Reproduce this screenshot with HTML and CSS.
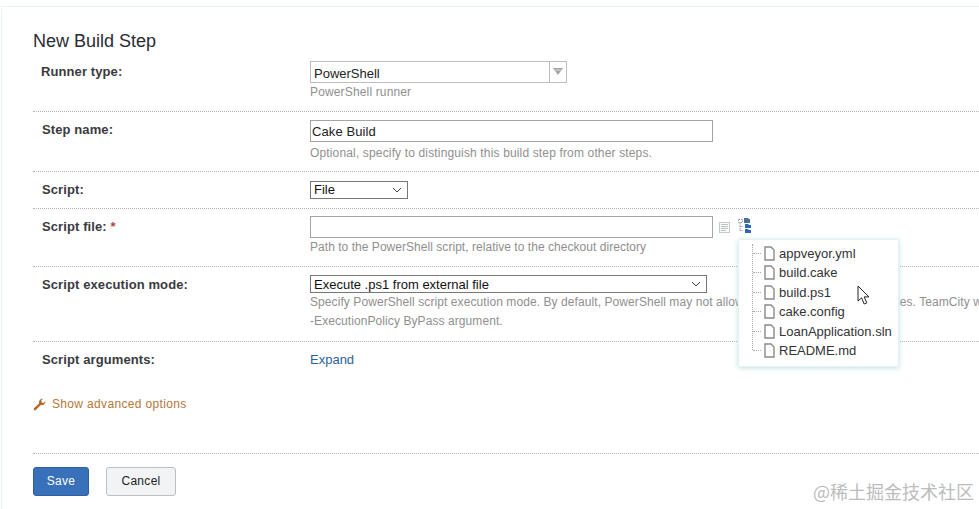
FILE: index.html
```html
<!DOCTYPE html>
<html lang="en">
<head>
  <meta charset="UTF-8" />
  <meta name="viewport" content="width=device-width, initial-scale=1.0" />
  <title>New Build Step</title>
  <link rel="stylesheet" href="styles.css">
</head>
<body>
  <div class="panel">
    <h2 class="title">New Build Step</h2>

    <div class="row row-first">
      <div class="label label-first">Runner type:</div>
      <div class="field">
        <div class="combo">
          <div class="combo-text">PowerShell</div>
          <div class="combo-btn">
            <svg width="12" height="8" viewBox="0 0 12 8"><path d="M1 0h10L6 7z" fill="#a4a4a4"/><path d="M3.5 2h5" stroke="#e2e2e2"/></svg>
          </div>
        </div>
        <div class="hint">PowerShell runner</div>
      </div>
    </div>

    <div class="row row-name">
      <div class="label">Step name:</div>
      <div class="field">
        <input class="text-input" type="text" value="Cake Build">
        <div class="hint">Optional, specify to distinguish this build step from other steps.</div>
      </div>
    </div>

    <div class="row row-script">
      <div class="label label-low">Script:</div>
      <div class="field">
        <div class="select select-short">
          <span>File</span>
          <svg width="10" height="6" viewBox="0 0 10 6"><path d="M1 1l4 4 4-4" fill="none" stroke="#444" stroke-width="1"/></svg>
        </div>
      </div>
    </div>

    <div class="row row-file">
      <div class="label">Script file: <span class="req">*</span></div>
      <div class="field">
        <div class="input-line">
          <input class="text-input" type="text" value="">
          <svg class="icon-list" width="11" height="11" viewBox="0 0 11 11"><rect x="0.5" y="0.5" width="10" height="10" fill="#fafbfb" stroke="#c3cccc"/><path d="M2 2.5h7M2 4.5h7M2 6.5h7M2 8.5h5" stroke="#bcc6c6"/></svg>
          <svg class="icon-tree" width="14" height="15" viewBox="0 0 14 15"><path d="M0.5 1.5h4v3h-4zM2 5v8M2 8.5h3M2 12.5h3" fill="none" stroke="#8c9aa2" stroke-dasharray="1.5 1"/><path d="M6 0h4l1 1h1v4H6z" fill="#4a6f9c"/><path d="M7 6h3l1 1h2v3H7zM7 11h3l1 1h2v3H7z" fill="#2f68ae"/></svg>
        </div>
        <div class="hint">Path to the PowerShell script, relative to the checkout directory</div>
      </div>
    </div>

    <div class="row row-mode">
      <div class="label label-low">Script execution mode:</div>
      <div class="field">
        <div class="select select-long">
          <span>Execute .ps1 from external file</span>
          <svg width="10" height="6" viewBox="0 0 10 6"><path d="M1 1l4 4 4-4" fill="none" stroke="#444" stroke-width="1"/></svg>
        </div>
        <div class="hint">Specify PowerShell script execution mode. By default, PowerShell may not allow execution of arbitrary .ps1 files. TeamCity will try to bypass the policy by adding</div>
        <div class="hint">-ExecutionPolicy ByPass argument.</div>
      </div>
    </div>

    <div class="row row-args">
      <div class="label">Script arguments:</div>
      <div class="field"><a class="expand" href="#">Expand</a></div>
    </div>

    <div class="advanced">
      <svg width="13" height="13" viewBox="0 0 13 13"><path d="M0.8 10.6L6.2 5.2C5.6 3 7.2 0.6 10 0.8L8.2 2.8 8.8 4.4 10.4 5 12.4 3.2C12.6 6 10 7.6 7.8 7L2.4 12.4C1.6 12.8 0.4 11.6 0.8 10.6z" fill="#b5682c"/></svg>
      <a class="advanced-link" href="#">Show advanced options</a>
    </div>

    <div class="actions">
      <button class="btn btn-save">Save</button>
      <button class="btn btn-cancel">Cancel</button>
    </div>
  </div>

  <div class="popup">
    <div class="tree">
      <div class="tree-item"><svg class="file" width="11" height="15" viewBox="0 0 11 15"><path d="M1 1h6l3 3v10H1z" fill="#fff" stroke="#8a8a8a" stroke-width="1.4"/></svg>appveyor.yml</div>
      <div class="tree-item"><svg class="file" width="11" height="15" viewBox="0 0 11 15"><path d="M1 1h6l3 3v10H1z" fill="#fff" stroke="#8a8a8a" stroke-width="1.4"/></svg>build.cake</div>
      <div class="tree-item"><svg class="file" width="11" height="15" viewBox="0 0 11 15"><path d="M1 1h6l3 3v10H1z" fill="#fff" stroke="#8a8a8a" stroke-width="1.4"/></svg>build.ps1</div>
      <div class="tree-item"><svg class="file" width="11" height="15" viewBox="0 0 11 15"><path d="M1 1h6l3 3v10H1z" fill="#fff" stroke="#8a8a8a" stroke-width="1.4"/></svg>cake.config</div>
      <div class="tree-item"><svg class="file" width="11" height="15" viewBox="0 0 11 15"><path d="M1 1h6l3 3v10H1z" fill="#fff" stroke="#8a8a8a" stroke-width="1.4"/></svg>LoanApplication.sln</div>
      <div class="tree-item"><svg class="file" width="11" height="15" viewBox="0 0 11 15"><path d="M1 1h6l3 3v10H1z" fill="#fff" stroke="#8a8a8a" stroke-width="1.4"/></svg>README.md</div>
    </div>
  </div>

  <svg class="cursor" width="14" height="21" viewBox="0 0 14 21"><path d="M1 1v15l3.6-3.2 2.6 6.2 2.6-1.1-2.6-6H12z" fill="#fff" stroke="#222" stroke-width="1"/></svg>

  <div class="watermark">@稀土掘金技术社区</div>
</body>
</html>
```

FILE: styles.css
```css
html, body {
  height: 100%;
}
body {
  margin: 0;
  background-color: #fff;
  font-family: "Liberation Sans", Arial, sans-serif;
  overflow: hidden;
  position: relative;
}
.panel {
  margin: 6px 0 0 1px;
  height: 503px;
  box-sizing: border-box;
  border-top: 1px solid #e3f4f5;
  border-left: 1px solid #e3f4f5;
  padding: 24px 0 0 31px;
}
.title {
  margin: 0;
  font-size: 18px;
  line-height: 21px;
  font-weight: normal;
  color: #2b2b33;
}
.row {
  display: flex;
  border-bottom: 1px dotted #b4b4b4;
  padding: 8px 0 9px;
}
.row-first {
  padding-top: 9px;
}
.row-name .hint {
  margin-top: 2px;
}
.row-name {
  padding-bottom: 8px;
}
.row-script {
  padding-top: 9px;
}
.row-file {
  padding-top: 7px;
}
.row-file .hint {
  letter-spacing: 0.04px;
}
.row-mode {
  padding-bottom: 10px;
}
.row-mode .hint {
  letter-spacing: 0.08px;
}
.row-args {
  border-bottom: 0;
}
.label {
  width: 277px;
  flex: none;
  box-sizing: border-box;
  padding: 2px 0 0 9px;
  font-size: 13px;
  line-height: 16px;
  font-weight: bold;
  letter-spacing: 0.1px;
  color: #3a3a40;
}
.label-first {
  padding-top: 3px;
  padding-left: 8px;
}
.label-low {
  padding-top: 1px;
}
.row-file .label {
  padding-top: 3px;
}
.row-mode .label {
  padding-top: 2px;
}
.req {
  color: #b04a3a;
}
.field {
  flex: 1;
  min-width: 0;
  white-space: nowrap;
}
.combo {
  display: flex;
  width: 257px;
  height: 22px;
  box-sizing: border-box;
  border: 1px solid #bdbdbd;
}
.combo-text {
  flex: 1;
  padding: 2px 0 0 3px;
  font-size: 13px;
  line-height: 20px;
  color: #222;
}
.combo-btn {
  width: 16px;
  border-left: 1px solid #bdbdbd;
  display: flex;
  align-items: center;
  justify-content: center;
}
.hint {
  font-size: 12px;
  line-height: 19px;
  letter-spacing: 0.15px;
  color: #8f8f8f;
}
.text-input {
  display: block;
  flex: none;
  width: 403px;
  height: 22px;
  box-sizing: border-box;
  margin: 0;
  border: 1px solid #a5a5a5;
  padding: 0 1px;
  font-family: inherit;
  font-size: 13px;
  letter-spacing: 0.1px;
  color: #222;
  outline: none;
}
.select {
  display: flex;
  align-items: center;
  justify-content: space-between;
  height: 18px;
  box-sizing: border-box;
  border: 1px solid #777;
  padding: 0 5px 1px 3px;
  font-size: 13px;
  color: #111;
}
.select-short {
  width: 98px;
}
.select-long {
  width: 397px;
  padding-bottom: 0;
}
.input-line {
  display: flex;
  align-items: center;
}
.icon-list {
  flex: none;
  margin-left: 6px;
}
.icon-tree {
  flex: none;
  margin: -3px 0 0 8px;
}
.expand {
  display: block;
  padding-top: 2px;
  font-size: 13px;
  line-height: 16px;
  color: #2d6299;
  text-decoration: none;
}
.advanced {
  display: flex;
  align-items: center;
  gap: 6px;
  margin-top: 19px;
}
.advanced-link {
  font-size: 12px;
  line-height: 16px;
  letter-spacing: 0.34px;
  color: #b5773a;
  text-decoration: none;
}
.actions {
  display: flex;
  gap: 17px;
  margin-top: 41px;
  padding-top: 13px;
  border-top: 1px dotted #b4b4b4;
}
.btn {
  height: 29px;
  box-sizing: border-box;
  border-radius: 3px;
  font-family: inherit;
  font-size: 12px;
  letter-spacing: 0.3px;
  padding: 0 0 2px;
}
.btn-save {
  width: 56px;
  border: 1px solid #2f5f9f;
  background-color: #3870ba;
  color: #fff;
}
.btn-cancel {
  width: 70px;
  border: 1px solid #b9c0c6;
  background-color: #f1f3f5;
  color: #222;
}
.popup {
  position: absolute;
  left: 738px;
  top: 239px;
  width: 161px;
  height: 128px;
  box-sizing: border-box;
  padding: 3.5px 0 0 13px;
  background-color: #fff;
  border: 1px solid #e4f2f2;
  border-radius: 2px;
  box-shadow: 0 1px 5px rgba(150, 205, 205, 0.6);
}
.tree {
  border-left: 1px dotted #aaa;
  height: 106px;
}
.tree-item {
  display: flex;
  align-items: center;
  height: 19.5px;
  font-size: 13px;
  color: #333;
  white-space: nowrap;
  position: relative;
  padding-left: 11px;
  gap: 4px;
}
.tree-item::before {
  content: "";
  position: absolute;
  left: 0;
  top: 9px;
  width: 8px;
  border-top: 1px dotted #aaa;
}
.file {
  flex: none;
}
.cursor {
  position: absolute;
  left: 857px;
  top: 285px;
}
.watermark {
  position: absolute;
  left: 813px;
  top: 479px;
  font-family: "Noto Sans CJK SC", sans-serif;
  font-size: 18px;
  line-height: 24px;
  color: #bcbcbc;
  white-space: nowrap;
}
```
